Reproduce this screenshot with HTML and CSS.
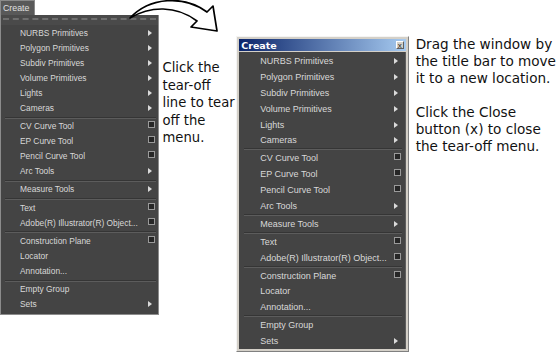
FILE: index.html
```html
<!DOCTYPE html>
<html lang="en">

<head>
    <meta charset="UTF-8">
    <title>Create menu tear-off</title>
    <link rel="stylesheet" href="styles.css">
</head>

<body>
    <div class="scene">
        <!-- docked menu with the tear-off line -->
        <div class="menu-col">
            <div class="tab">Create</div>
            <div class="menu docked">
                <div class="tear"></div>
                <div class="item sub">NURBS Primitives</div>
                <div class="item sub">Polygon Primitives</div>
                <div class="item sub">Subdiv Primitives</div>
                <div class="item sub">Volume Primitives</div>
                <div class="item sub">Lights</div>
                <div class="item sub">Cameras</div>
                <div class="sep"></div>
                <div class="item opt">CV Curve Tool</div>
                <div class="item opt">EP Curve Tool</div>
                <div class="item opt">Pencil Curve Tool</div>
                <div class="item sub">Arc Tools</div>
                <div class="sep"></div>
                <div class="item sub">Measure Tools</div>
                <div class="sep"></div>
                <div class="item opt">Text</div>
                <div class="item opt">Adobe(R) Illustrator(R) Object...</div>
                <div class="sep"></div>
                <div class="item opt">Construction Plane</div>
                <div class="item">Locator</div>
                <div class="item">Annotation...</div>
                <div class="sep"></div>
                <div class="item">Empty Group</div>
                <div class="item sub">Sets</div>
            </div>
        </div>

        <p class="note note-left">Click the<br>tear-off<br>line to tear<br>off the<br>menu.</p>

        <!-- torn-off window -->
        <div class="window">
            <div class="titlebar">
                <span class="title">Create</span>
                <span class="close">x</span>
            </div>
            <div class="menu floating">
                <div class="item sub">NURBS Primitives</div>
                <div class="item sub">Polygon Primitives</div>
                <div class="item sub">Subdiv Primitives</div>
                <div class="item sub">Volume Primitives</div>
                <div class="item sub">Lights</div>
                <div class="item sub">Cameras</div>
                <div class="sep"></div>
                <div class="item opt">CV Curve Tool</div>
                <div class="item opt">EP Curve Tool</div>
                <div class="item opt">Pencil Curve Tool</div>
                <div class="item sub">Arc Tools</div>
                <div class="sep"></div>
                <div class="item sub">Measure Tools</div>
                <div class="sep"></div>
                <div class="item opt">Text</div>
                <div class="item opt">Adobe(R) Illustrator(R) Object...</div>
                <div class="sep"></div>
                <div class="item opt">Construction Plane</div>
                <div class="item">Locator</div>
                <div class="item">Annotation...</div>
                <div class="sep"></div>
                <div class="item">Empty Group</div>
                <div class="item sub">Sets</div>
            </div>
        </div>

        <div class="note note-right">
            <p>Drag the window by<br>the title bar to move<br>it to a new location.</p>
            <p>Click the Close<br>button (x) to close<br>the tear-off menu.</p>
        </div>

        <svg class="arrow" viewBox="120 0 115 40" width="115" height="40">
            <path d="M130,18 C150,6 176,5 197,21 L191,27 L217,31 L213,6 L207,12 C184,-5 150,-3 130,18 Z"
                fill="#fff" stroke="#000" stroke-width="1.7" stroke-linejoin="round" />
        </svg>
    </div>
</body>

</html>
```

FILE: styles.css
```css
body {
    margin: 0;
    background: #ffffff;
    font-family: "Liberation Sans", Arial, sans-serif;
}

.scene {
    position: relative;
    display: flex;
    align-items: flex-start;
    width: 556px;
    height: 356px;
}

/* docked menu */
.menu-col {
    width: 160px;
}

.tab {
    width: 31px;
    height: 14px;
    line-height: 14px;
    padding-left: 2px;
    font-size: 8.8px;
    color: #e0e0e0;
    background-color: #595959;
    border: 1px solid #8a8a8a;
    border-bottom: none;
}

.menu {
    background-color: #444444;
    color: #d8d8d8;
}

.docked {
    border: 1px solid #8c8c8c;
    border-top: none;
    padding-bottom: 2px;
    font-size: 8.4px;
}

.tear {
    height: 10px;
    padding-top: 3px;
    box-sizing: border-box;
    background-color: #4a4a4a;
}

.tear::before {
    content: "";
    display: block;
    margin: 0 2px;
    border-top: 2px dashed #6e6e6e;
}

.item {
    display: flex;
    align-items: center;
    white-space: nowrap;
}

.docked .item {
    height: 15.1px;
    padding-left: 19px;
    padding-right: 3px;
}

.floating .item {
    height: 15.9px;
    padding-left: 21px;
    padding-right: 4px;
}

.item.sub::after {
    content: "";
    margin-left: auto;
    margin-right: 3px;
    border-left: 4px solid #dadada;
    border-top: 3px solid transparent;
    border-bottom: 3px solid transparent;
}

.item.opt::after {
    content: "";
    margin-left: auto;
    width: 5px;
    height: 5px;
    margin-top: -3px;
    background-color: #262626;
    border: 1px solid #9a9a9a;
}

.sep {
    border-top: 1px solid #353535;
    border-bottom: 1px solid #5c5c5c;
}

.docked .sep {
    margin: 1px 2px 0 4px;
}

.floating .sep {
    margin: 0 3px 0 5px;
}

.note {
    margin: 0;
    font-family: "DejaVu Sans", sans-serif;
    font-size: 13.6px;
    color: #111111;
}

.note-left {
    width: 74px;
    margin-top: 59px;
    margin-left: 3px;
    font-size: 13.2px;
    line-height: 17.5px;
    white-space: nowrap;
}

/* torn-off window */
.window {
    width: 173px;
    margin-top: 36px;
    padding: 2px;
    box-sizing: border-box;
    background-color: #d4d0c8;
    border: 1px solid;
    border-color: #f4f4f4 #808080 #808080 #f4f4f4;
}

.titlebar {
    display: flex;
    align-items: center;
    justify-content: space-between;
    height: 12px;
    padding: 0 2px;
    margin-bottom: 1px;
    background: linear-gradient(to right, #0a246a, #a6caf0);
}

.title {
    font-family: "DejaVu Sans", sans-serif;
    font-weight: bold;
    font-size: 9.5px;
    color: #ffffff;
}

.close {
    width: 8px;
    height: 8px;
    line-height: 7px;
    text-align: center;
    font-size: 8px;
    color: #222222;
    background-color: #d4d0c8;
    border: 1px solid;
    border-color: #ffffff #606060 #606060 #ffffff;
    box-sizing: border-box;
}

.floating {
    font-size: 9px;
    padding-top: 1px;
    border-right: 1px solid #5e5e5e;
}

.note-right {
    margin-top: 36px;
    margin-left: 7px;
    line-height: 17px;
    white-space: nowrap;
}

.note-right p {
    margin: 0 0 17px;
}

.arrow {
    position: absolute;
    left: 120px;
    top: 0;
}
```
